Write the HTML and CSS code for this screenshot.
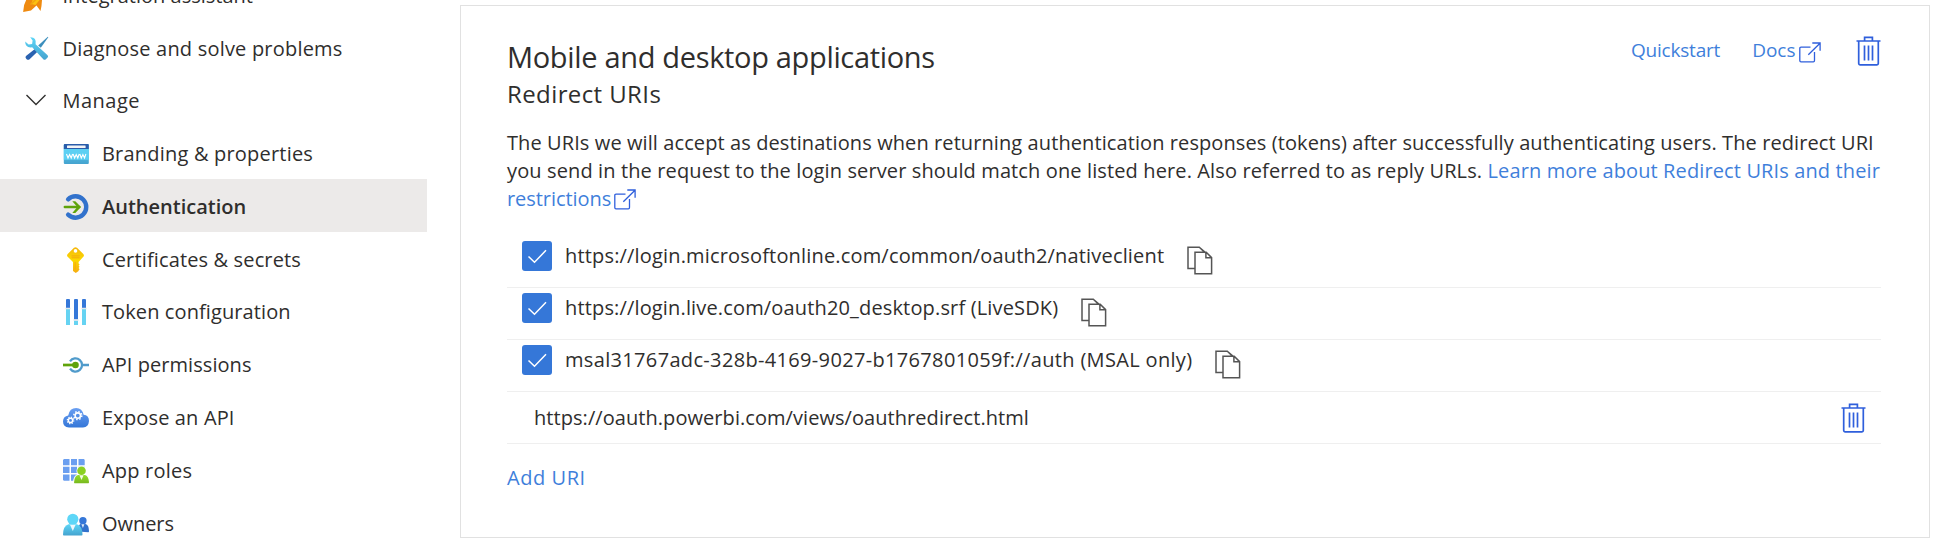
FILE: index.html
```html
<!DOCTYPE html>
<html lang="en">
<head>
<meta charset="utf-8">
<title>Authentication</title>
<link rel="stylesheet" href="styles.css">
</head>
<body>
<svg class="defs" width="0" height="0" aria-hidden="true">
  <defs>
    <linearGradient id="g-cyan" x1="0" y1="0" x2="0" y2="1"><stop offset="0" stop-color="#5dd6f7"/><stop offset="1" stop-color="#45a3cf"/></linearGradient>
    <linearGradient id="g-cloud" x1="0" y1="0" x2="0" y2="1"><stop offset="0" stop-color="#6a9ff2"/><stop offset="1" stop-color="#3577d8"/></linearGradient>
    <linearGradient id="g-green" x1="0" y1="0" x2="0" y2="1"><stop offset="0" stop-color="#94dc2c"/><stop offset="1" stop-color="#78b91e"/></linearGradient>
    <linearGradient id="g-key" x1="0" y1="0" x2="0" y2="1"><stop offset="0" stop-color="#f6b60c"/><stop offset=".5" stop-color="#fad900"/><stop offset="1" stop-color="#f6ab10"/></linearGradient>
    <symbol id="trash" viewBox="0 0 25 30">
      <g fill="none" stroke="#2f5fdc" stroke-width="1.7"><path d="M.5 5H24.5M8.6 5V1.3H16.4V5M2.7 5V27.5Q2.7 28.8 4 28.8H21Q22.3 28.8 22.3 27.5V5M8.5 9.5V24.5M12.5 9.5V24.5M16.5 9.5V24.5"/></g>
    </symbol>
    <symbol id="open" viewBox="0 0 22 21">
      <g fill="none" stroke="#2f5fdc" stroke-width="1.3"><path d="M11.5 5.2H2Q.8 5.2 .8 6.4V18.6Q.8 19.8 2 19.8H14.3Q15.5 19.8 15.5 18.6V10M9.3 12.8L21 1.2M13.3 1H21.1V8.8"/></g>
    </symbol>
    <symbol id="copy" viewBox="0 0 26 29">
      <g fill="none" stroke="#555" stroke-width="1.5"><path d="M7.5 22.6H1V1.2H12.3L16.5 5.2M8 6.2H19.2L24.6 11.6V27.7H8ZM18.9 6.2V11.8H24.6M12.3 1.2L18.5 6.6"/></g>
    </symbol>
    <symbol id="check" viewBox="0 0 30 30"><path d="M6.5 15.5L12.5 21.3L24 9.3" fill="none" stroke="#fff" stroke-width="1.5"/></symbol>
  </defs>
</svg>
<div class="page">
  <nav class="sidebar">
    <a class="item top"><svg class="icon" viewBox="0 0 26 26"><path d="M-.8 29Q-1 20 5 13L9 7H18Q18.500 21 16.500 28L12.500 22.500L7 27.500Q3 28 -.8 29Z" fill="#ef8a10"/><path d="M8 19L11 8H17.500L15.500 17L11.500 22L7 21Z" fill="#fbc011"/><path d="M6.500 21.500L12.500 16L13 10" fill="none" stroke="#f2a511" stroke-width="1.500"/></svg><span class="label">Integration assistant</span></a>
    <a class="item top"><svg class="icon" viewBox="0 0 26 26"><path d="M23.8 .8L24.3 1.3L16.8 11.8L14.2 9.6Z" fill="#3c8fbd"/><path d="M11.5 12.5L14.2 15L5.6 23.2Q4.3 24.4 2.6 23.2L1.6 21.8Q1.2 20.6 2.3 19.8Z" fill="#2a62b0"/><path d="M6.2 1.2Q12.8 1 11.6 8.2L23.6 19.3Q24.6 20.4 23.6 21.6L21.6 23.4Q20.4 24.2 19.3 23.2L8.2 11.3Q1 12.2 1.2 5.6L4.6 8.4L8.1 7.9L8.6 4.4Z" fill="url(#g-cyan)"/></svg><span class="label diagnose">Diagnose and solve problems</span></a>
    <a class="item top"><svg class="icon" viewBox="0 0 26 26"><path d="M2.5 7L12 16.6L21.5 7" fill="none" stroke="#323130" stroke-width="1.4"/></svg><span class="label manage">Manage</span></a>
    <a class="item"><svg class="icon" viewBox="0 0 26 26"><rect x=".8" y="3" width="25" height="20" rx="1" fill="url(#g-cyan)"/><rect x=".8" y="7.8" width="25" height="11" fill="#5dd0f3"/><path d="M.8 4Q.8 3 1.8 3H24.8Q25.8 3 25.8 4V8H.8Z" fill="#2a5caa"/><rect x="4" y="4.5" width="18.6" height="2.4" rx=".5" fill="#f3f3f6"/><path d="M3.5 13L5 17L6.6 13.6L8.2 17L9.6 13M10.1 13L11.6 17L13.2 13.6L14.8 17L16.2 13M16.8 13L18.3 17L19.9 13.6L21.5 17L22.9 13" fill="none" stroke="#fff" stroke-width="1.1"/></svg><span class="label branding">Branding &amp; properties</span></a>
    <a class="item active"><svg class="icon" viewBox="0 0 26 26"><path d="M5.1 5.3A10.7 10.7 0 1 1 5.1 20.7" fill="none" stroke="#3272cc" stroke-width="4.4" stroke-linecap="round"/><path d="M1.8 13H16.5" fill="none" stroke="#eceae9" stroke-width="4"/><path d="M1.8 13H16.3" stroke="#5fa30b" stroke-width="2.4" stroke-linecap="round"/><path d="M9.3 7.2H12.3L18 13L12.3 18.9H9.3L14.3 13Z" fill="#5fa30b"/></svg><span class="label auth">Authentication</span></a>
    <a class="item"><svg class="icon" viewBox="0 0 26 26"><path d="M11 .8Q12.5-.5 14 .8L20.3 7Q21.6 8.4 20.3 9.8L15.6 15V16.5L16.6 17.5L15.6 18.7L16.6 19.8L15.6 21L16.6 22.2L15.6 23.4V24L12.8 26L10 24V15L4.7 9.8Q3.4 8.4 4.7 7Z" fill="url(#g-key)"/><circle cx="12.5" cy="3.9" r="1.8" fill="#fff"/><path d="M8.5 8.9H16.7M8.5 10.8H16.7" stroke="#f2a511" stroke-width=".9"/><path d="M12.2 15V22.5" stroke="#f6a911"/></svg><span class="label certs">Certificates &amp; secrets</span></a>
    <a class="item"><svg class="icon" viewBox="0 0 26 26"><path d="M3 9.5H7V26H3ZM11 21.5H15V26H11ZM19 9.5H23V26H19Z" fill="#66d3f2"/><path d="M3 9V1Q3 0 4 0H6Q7 0 7 1V9ZM11 20.5V1Q11 0 12 0H14Q15 0 15 1V20.5ZM19 9V1Q19 0 20 0H22Q23 0 23 1V9Z" fill="#3577d8"/><path d="M2.5 9.4H7.5M10.5 21H15.5M18.5 9.4H23.5" stroke="#dfe6ec" stroke-width="1.5"/></svg><span class="label token">Token configuration</span></a>
    <a class="item"><svg class="icon" viewBox="0 0 26 26"><path d="M7 9.3A6.6 6.6 0 1 1 7 16.7M19 13H26" fill="none" stroke="#509bcb" stroke-width="2.3"/><path d="M0 13H12" stroke="#5fa30b" stroke-width="2.7"/><circle cx="12.5" cy="13" r="3.3" fill="#5fa30b"/></svg><span class="label api">API permissions</span></a>
    <a class="item"><svg class="icon" viewBox="0 0 26 26"><path d="M6 22.6Q0 22.2 0 16.2Q.3 11.2 5.2 10.4Q6.6 3 13.2 3Q19.3 3.2 20.6 9.8Q26 10.4 26 16Q25.6 22 20 22.6Z" fill="url(#g-cloud)"/><g fill="none" stroke="#fff"><circle cx="14.8" cy="10.6" r="2.7" stroke-width="1.6"/><circle cx="14.8" cy="10.6" r="4" stroke-width="1.5" stroke-dasharray="1.5 1.64"/><circle cx="7.5" cy="15.4" r="2.1" stroke-width="1.4"/><circle cx="7.5" cy="15.4" r="3.2" stroke-width="1.3" stroke-dasharray="1.25 1.26"/></g></svg><span class="label expose">Expose an API</span></a>
    <a class="item"><svg class="icon" viewBox="0 0 26 26"><path d="M1 1H6.5V7.3H0V2ZM8 1H14V7.300H8ZM15.500 1H21L21.700 2V7.300H15.500ZM0 8.800H6.500V15H0ZM8 8.800H14V15H8ZM15.500 8.800H21.700V15H15.500ZM0 16.500H6.500V22.700H1L0 22ZM8 16.500H14V22.700H8Z" fill="#6b9ff0"/><path d="M10.500 25.500Q10.500 18 14.500 16.500H22Q26 18 26 25.500Z" fill="#fff" stroke="#fff"/><circle cx="18.5" cy="13" r="5" fill="#fff"/><path d="M11.5 25.200Q11 25.200 11.100 24Q11.500 17.800 15 17H22Q25.500 17.800 26 24Q26 25.200 25.400 25.200Z" fill="url(#g-green)"/><circle cx="18.5" cy="12.800" r="4.3" fill="#8ad022"/><path d="M16.4 17.200L18.500 22L20.600 17.200Z" fill="#f4faea"/></svg><span class="label roles">App roles</span></a>
    <a class="item"><svg class="icon" viewBox="0 0 26 26"><path d="M15 20.500Q15 14 17.500 13H22.500Q26 14 26 20.300Q26 21.200 25.300 21.200Z" fill="#3272cc"/><circle cx="19.9" cy="9.700" r="3.7" fill="#3577d8"/><path d="M18.4 13.300L19.900 17L21.400 13.300Z" fill="#dce9fa"/><path d="M.8 24.500Q0 24.500 0 23.500Q.2 14.800 5.500 13.200H14Q19.300 14.800 19.500 23.500Q19.500 24.500 18.700 24.500Z" fill="url(#g-cyan)"/><circle cx="9.8" cy="8.300" r="5.6" fill="#5dd6f7"/><path d="M7 13.700L9.800 20L12.600 13.700Z" fill="#eef8fc"/></svg><span class="label owners">Owners</span></a>
  </nav>
  <main class="card">
    <header class="head">
      <div class="titles">
        <h1>Mobile and desktop applications</h1>
        <h2>Redirect URIs</h2>
      </div>
      <div class="actions">
        <a class="quick">Quickstart</a>
        <a class="docs">Docs<svg class="open"><use href="#open"/></svg></a>
        <svg class="trash"><use href="#trash"/></svg>
      </div>
    </header>
    <p class="desc">
      <span class="line first">The URIs we will accept as destinations when returning authentication responses (tokens) after successfully authenticating users. The redirect URI</span>
      <span class="line second">you send in the request to the login server should match one listed here. Also referred to as reply URLs. <a>Learn more about Redirect URIs and their</a></span>
      <span class="line third"><a>restrictions</a><svg class="open"><use href="#open"/></svg></span>
    </p>
    <ul class="uris">
      <li class="row"><svg class="box"><use href="#check"/></svg><span class="native">https://login.microsoftonline.com/common/oauth2/nativeclient</span><svg class="copy"><use href="#copy"/></svg></li>
      <li class="row"><svg class="box"><use href="#check"/></svg><span class="live">https://login.live.com/oauth20_desktop.srf (LiveSDK)</span><svg class="copy"><use href="#copy"/></svg></li>
      <li class="row"><svg class="box"><use href="#check"/></svg><span class="msal">msal31767adc-328b-4169-9027-b1767801059f://auth (MSAL only)</span><svg class="copy"><use href="#copy"/></svg></li>
      <li class="row custom"><span>https://oauth.powerbi.com/views/oauthredirect.html</span><svg class="trash"><use href="#trash"/></svg></li>
    </ul>
    <a class="add">Add URI</a>
  </main>
</div>
</body>
</html>
```
FILE: styles.css
```css
* { box-sizing: border-box; }
body { margin: 0; background: #fff; color: #2f2e2d; font-family: "Open Sans", "Noto Sans", sans-serif; font-size: 20px; overflow: hidden; }
.defs { display: block; height: 0; }
.page { display: flex; height: 553px; overflow: hidden; }

.sidebar { width: 427px; flex: none; margin-top: -32.2px; }
.item { display: flex; align-items: center; height: 52.8px; padding-left: 63px; white-space: nowrap; color: #2f2e2d; }
.item.top { padding-left: 24px; }
.icon { width: 26px; height: 26px; flex: none; margin-right: 13px; margin-top: 3px; overflow: visible; }
.top .icon { margin-right: 12.5px; }
.label { padding-top: 2px; }
.active { background: #eceae9; font-weight: 600; }
.diagnose { letter-spacing: .2px; }
.manage { letter-spacing: .5px; }
.branding { letter-spacing: .2px; }
.auth { letter-spacing: 0; }
.certs { letter-spacing: .14px; }
.token { letter-spacing: .1px; }
.api { letter-spacing: .06px; }
.expose { letter-spacing: .15px; }
.roles { letter-spacing: .2px; }
.owners { letter-spacing: -.05px; }

.card { width: 1470px; height: 533px; margin: 5px 0 0 33px; padding: 30px 48px 0 46px; border: 1px solid #e1e1e1; }
.head { display: flex; justify-content: space-between; }
h1, h2 { margin: 0; font-weight: 400; white-space: nowrap; }
h1 { font-size: 29px; line-height: 42px; letter-spacing: -.33px; }
h2 { font-size: 24px; line-height: 32px; letter-spacing: .4px; }
a { color: #3f7fdb; }
.actions { display: flex; align-items: flex-start; font-size: 19px; line-height: 29px; }
.quick { margin-right: 32px; letter-spacing: -.2px; }
.docs { display: flex; margin-right: 35.5px; }
.open { width: 22px; height: 21px; margin: 5px 0 0 3px; flex: none; }
.trash { width: 25px; height: 30px; flex: none; }
.docs .open { margin-top: 6px; }

.desc { margin: 19px 0 0; line-height: 28px; }
.line { display: block; white-space: nowrap; }
.first { letter-spacing: .094px; }
.second { letter-spacing: .122px; }
.third { display: flex; letter-spacing: -.05px; }
.third .open { margin-top: 4px; margin-left: 2.5px; }

.uris { list-style: none; margin: 23px 0 0; padding: 0; }
.row { display: flex; align-items: flex-start; height: 52px; border-bottom: 1px solid #efefef; padding: 5px 0 0 15px; line-height: 29px; white-space: nowrap; }
.box { width: 30px; height: 30px; background: #3577d8; border-radius: 3px; margin-right: 13px; flex: none; }
.copy { width: 26px; height: 29px; margin: 5px 0 0 22.5px; flex: none; }
.native { letter-spacing: .17px; }
.live { letter-spacing: .155px; }
.msal { letter-spacing: .335px; }
.custom { align-items: center; padding: 0 15px 0 27px; justify-content: space-between; letter-spacing: .06px; }
.add { display: block; margin-top: 20px; letter-spacing: .55px; }
```
